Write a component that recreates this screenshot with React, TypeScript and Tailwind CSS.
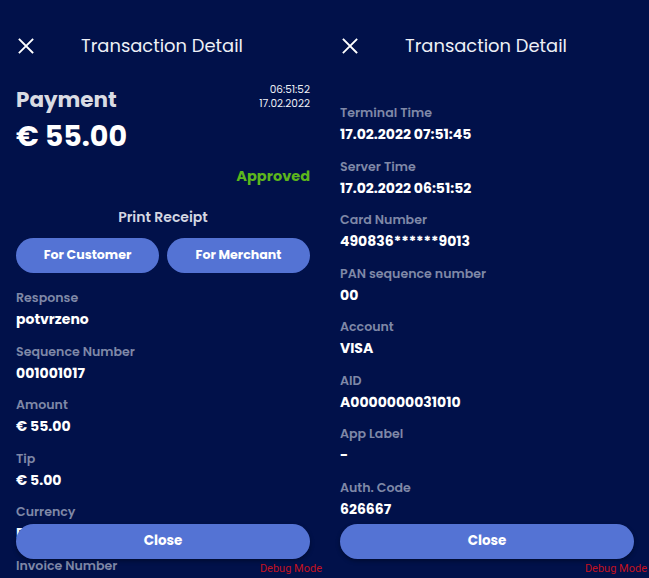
import React from "react";

const font = { fontFamily: "Poppins, Inter, 'Noto Sans', sans-serif" };

function XIcon() {
  return (
    <svg width="16" height="16" viewBox="0 0 16 16" fill="none" stroke="white" strokeWidth="1.8" strokeLinecap="square">
      <path d="M1.5 1.5 L14.5 14.5 M14.5 1.5 L1.5 14.5" />
    </svg>
  );
}

function Header() {
  return (
    <div className="flex items-center h-[24px] mt-[34px]">
      <div className="ml-[18px] w-[16px] h-[16px] flex items-center">
        <XIcon />
      </div>
      <div className="ml-[47px] text-[17.9px] font-normal text-[#eef0f6] leading-[24px]">
        Transaction Detail
      </div>
    </div>
  );
}

function Field({ label, value }: { label: string; value: string }) {
  return (
    <div className="h-[53.5px]">
      <div className="text-[12.6px] font-semibold text-[#7f88a7] leading-[18px]">{label}</div>
      <div className="mt-[2px] text-[14px] font-bold text-white leading-[20px]">{value}</div>
    </div>
  );
}

function CloseBtn() {
  return (
    <>
      <div className="absolute left-[16px] top-[524px] w-[294px] h-[35px] rounded-full bg-[#5473d4] flex items-center justify-center text-white text-[13.5px] font-bold shadow-[0_2px_4px_rgba(0,0,0,0.35)]">
        Close
      </div>
      <div className="absolute right-[2px] top-[562px] text-[11px] text-[#c3111f] leading-[14px]" style={{ fontFamily: "Roboto, sans-serif" }}>
        Debug Mode
      </div>
    </>
  );
}

function LeftPanel() {
  return (
    <div className="relative w-[324px] h-[578px] overflow-hidden">
      <Header />
      <div className="px-[16px] pr-[14px]">
        <div className="flex justify-between mt-[27px]">
          <div className="text-[21.5px] font-bold text-[#d9dbe3] leading-[30px]">Payment</div>
          <div className="text-right text-[10.5px] text-[#eef0f6] leading-[14px] mt-[-2px]">
            <div>06:51:52</div>
            <div>17.02.2022</div>
          </div>
        </div>
        <div className="text-[28.5px] font-bold text-white leading-[36px] mt-[3px]">€ 55.00</div>
        <div className="text-right text-[14.5px] font-bold text-[#5cb61c] leading-[20px] mt-[12px]">Approved</div>
        <div className="text-center text-[14px] font-semibold text-[#d4d7e2] leading-[20px] mt-[21px]">Print Receipt</div>
        <div className="flex gap-[8px] mt-[11px]">
          <div className="flex-1 h-[35px] rounded-full bg-[#5473d4] flex items-center justify-center text-white text-[12.6px] font-bold">
            For Customer
          </div>
          <div className="flex-1 h-[35px] rounded-full bg-[#5473d4] flex items-center justify-center text-white text-[12.6px] font-bold">
            For Merchant
          </div>
        </div>
        <div className="mt-[16px]">
          <Field label="Response" value="potvrzeno" />
          <Field label="Sequence Number" value="001001017" />
          <Field label="Amount" value="€ 55.00" />
          <Field label="Tip" value="€ 5.00" />
          <Field label="Currency" value="EUR" />
          <Field label="Invoice Number" value="" />
        </div>
      </div>
      <CloseBtn />
    </div>
  );
}

function RightPanel() {
  return (
    <div className="relative w-[325px] h-[578px] overflow-hidden">
      <Header />
      <div className="px-[16px] pr-[15px] mt-[46px]">
        <Field label="Terminal Time" value="17.02.2022 07:51:45" />
        <Field label="Server Time" value="17.02.2022 06:51:52" />
        <Field label="Card Number" value="490836******9013" />
        <Field label="PAN sequence number" value="00" />
        <Field label="Account" value="VISA" />
        <Field label="AID" value="A0000000031010" />
        <Field label="App Label" value="-" />
        <Field label="Auth. Code" value="626667" />
      </div>
      <CloseBtn />
    </div>
  );
}

export default function App() {
  return (
    <div className="w-[649px] h-[578px] bg-[#01114a] flex" style={font}>
      <LeftPanel />
      <RightPanel />
    </div>
  );
}
